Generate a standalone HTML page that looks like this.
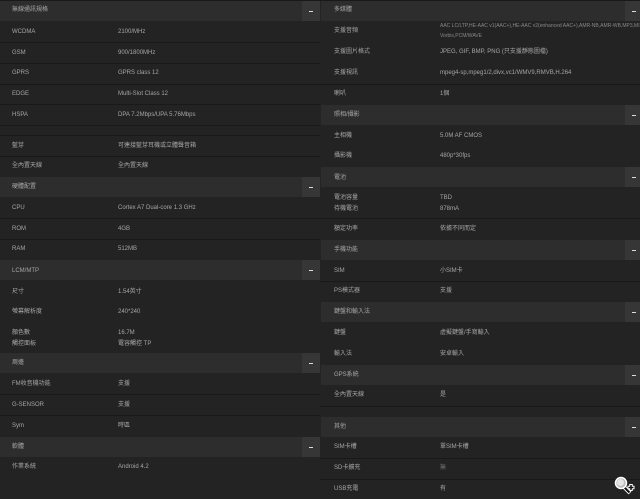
<!DOCTYPE html>
<html><head><meta charset="utf-8"><style>
body{margin:0;width:640px;height:499px;background:#232323;position:relative;overflow:hidden;font-family:"Liberation Sans","Noto Sans CJK TC",sans-serif;font-size:6px;color:#a6a6a6}
div{position:absolute}
.h{height:20px;background:#2d2d2d}
.m{height:20px;width:18px;background:#363636}
.m::after{content:"";position:absolute;left:7px;top:10px;width:4px;height:1px;background:#ddd}
.l{height:1px;background:#191919}
.t{line-height:8px;white-space:nowrap}
</style></head><body>
<div class="h" style="left:0;top:1px;width:302px"></div><div class="m" style="left:302px;top:1px"></div>
<div class="h" style="left:0;top:177px;width:302px"></div><div class="m" style="left:302px;top:177px"></div>
<div class="h" style="left:0;top:260px;width:302px"></div><div class="m" style="left:302px;top:260px"></div>
<div class="h" style="left:0;top:353px;width:302px"></div><div class="m" style="left:302px;top:353px"></div>
<div class="h" style="left:0;top:437px;width:302px"></div><div class="m" style="left:302px;top:437px"></div>
<div class="l" style="left:0;top:0;width:320px"></div>
<div class="l" style="left:0;top:42px;width:320px"></div>
<div class="l" style="left:0;top:63px;width:320px"></div>
<div class="l" style="left:0;top:84px;width:320px"></div>
<div class="l" style="left:0;top:104px;width:320px"></div>
<div class="l" style="left:0;top:125px;width:320px"></div>
<div class="l" style="left:0;top:135px;width:320px"></div>
<div class="l" style="left:0;top:156px;width:320px"></div>
<div class="l" style="left:0;top:218px;width:320px"></div>
<div class="l" style="left:0;top:239px;width:320px"></div>
<div class="l" style="left:0;top:394px;width:320px"></div>
<div class="l" style="left:0;top:415px;width:320px"></div>
<div class="t" style="left:12px;top:6px">無線通訊規格</div>
<div class="t" style="left:12px;top:28px">WCDMA</div><div class="t" style="left:118px;top:28px">2100/MHz</div>
<div class="t" style="left:12px;top:49px">GSM</div><div class="t" style="left:118px;top:49px">900/1800MHz</div>
<div class="t" style="left:12px;top:69px">GPRS</div><div class="t" style="left:118px;top:69px">GPRS class 12</div>
<div class="t" style="left:12px;top:90px">EDGE</div><div class="t" style="left:118px;top:90px">Multi-Slot Class 12</div>
<div class="t" style="left:12px;top:111px">HSPA</div><div class="t" style="left:118px;top:111px">DPA 7.2Mbps/UPA 5.76Mbps</div>
<div class="t" style="left:12px;top:142px">藍芽</div><div class="t" style="left:118px;top:142px">可連接藍芽耳機或立體聲音箱</div>
<div class="t" style="left:12px;top:162px">全內置天線</div><div class="t" style="left:118px;top:162px">全內置天線</div>
<div class="t" style="left:12px;top:183px">硬體配置</div>
<div class="t" style="left:12px;top:204px">CPU</div><div class="t" style="left:118px;top:204px">Cortex A7 Dual-core 1.3 GHz</div>
<div class="t" style="left:12px;top:225px">ROM</div><div class="t" style="left:118px;top:225px">4GB</div>
<div class="t" style="left:12px;top:245px">RAM</div><div class="t" style="left:118px;top:245px">512MB</div>
<div class="t" style="left:12px;top:267px">LCM/MTP</div>
<div class="t" style="left:12px;top:288px">尺寸</div><div class="t" style="left:118px;top:288px">1.54英寸</div>
<div class="t" style="left:12px;top:308px">螢幕解析度</div><div class="t" style="left:118px;top:308px">240*240</div>
<div class="t" style="left:12px;top:329px">顏色數</div><div class="t" style="left:118px;top:329px">16.7M</div>
<div class="t" style="left:12px;top:340px">觸控面板</div><div class="t" style="left:118px;top:340px">電容觸控 TP</div>
<div class="t" style="left:12px;top:359px">周邊</div>
<div class="t" style="left:12px;top:380px">FM收音機功能</div><div class="t" style="left:118px;top:380px">支援</div>
<div class="t" style="left:12px;top:401px">G-SENSOR</div><div class="t" style="left:118px;top:401px">支援</div>
<div class="t" style="left:12px;top:422px">Sym</div><div class="t" style="left:118px;top:422px">時區</div>
<div class="t" style="left:12px;top:443px">軟體</div>
<div class="t" style="left:12px;top:463px">作業系統</div><div class="t" style="left:118px;top:463px">Android 4.2</div>
<div class="h" style="left:321px;top:1px;width:304px"></div><div class="m" style="left:625px;top:1px;width:15px"></div>
<div class="h" style="left:321px;top:105px;width:304px"></div><div class="m" style="left:625px;top:105px;width:15px"></div>
<div class="h" style="left:321px;top:167px;width:304px"></div><div class="m" style="left:625px;top:167px;width:15px"></div>
<div class="h" style="left:321px;top:240px;width:304px"></div><div class="m" style="left:625px;top:240px;width:15px"></div>
<div class="h" style="left:321px;top:302px;width:304px"></div><div class="m" style="left:625px;top:302px;width:15px"></div>
<div class="h" style="left:321px;top:365px;width:304px"></div><div class="m" style="left:625px;top:365px;width:15px"></div>
<div class="h" style="left:321px;top:417px;width:304px"></div><div class="m" style="left:625px;top:417px;width:15px"></div>
<div class="l" style="left:320px;top:0;width:320px"></div>
<div class="l" style="left:320px;top:84px;width:320px"></div>
<div class="l" style="left:320px;top:218px;width:320px"></div>
<div class="l" style="left:320px;top:281px;width:320px"></div>
<div class="l" style="left:320px;top:406px;width:320px"></div>
<div class="l" style="left:320px;top:458px;width:320px"></div>
<div class="l" style="left:320px;top:479px;width:320px"></div>
<div class="t" style="left:334px;top:6px">多媒體</div>
<div class="t" style="left:334px;top:27px">支援音頻</div>
<div class="t" style="left:440px;top:22px;font-size:5px;color:#888">AAC LC/LTP,HE-AAC v1(AAC+),HE-AAC v2(enhanced AAC+),AMR-NB,AMR-WB,MP3,MIDI,Ogg</div>
<div class="t" style="left:440px;top:32px;font-size:5px;color:#888">Vorbis,PCM/WAVE</div>
<div class="t" style="left:334px;top:48px">支援圖片格式</div><div class="t" style="left:440px;top:48px">JPEG, GIF, BMP, PNG (只支援靜態圖檔)</div>
<div class="t" style="left:334px;top:69px">支援視訊</div><div class="t" style="left:440px;top:69px">mpeg4-sp,mpeg1/2,divx,vc1/WMV9,RMVB,H.264</div>
<div class="t" style="left:334px;top:90px">喇叭</div><div class="t" style="left:440px;top:90px">1個</div>
<div class="t" style="left:334px;top:111px">照相/攝影</div>
<div class="t" style="left:334px;top:132px">主相機</div><div class="t" style="left:440px;top:132px">5.0M AF CMOS</div>
<div class="t" style="left:334px;top:152px">攝影機</div><div class="t" style="left:440px;top:152px">480p*30fps</div>
<div class="t" style="left:334px;top:174px">電池</div>
<div class="t" style="left:334px;top:194px">電池容量</div><div class="t" style="left:440px;top:194px">TBD</div>
<div class="t" style="left:334px;top:205px">待機電池</div><div class="t" style="left:440px;top:205px">878mA</div>
<div class="t" style="left:334px;top:225px">額定功率</div><div class="t" style="left:440px;top:225px">依據不同而定</div>
<div class="t" style="left:334px;top:246px">手機功能</div>
<div class="t" style="left:334px;top:267px">SIM</div><div class="t" style="left:440px;top:267px">小SIM卡</div>
<div class="t" style="left:334px;top:287px">PS模式器</div><div class="t" style="left:440px;top:287px">支援</div>
<div class="t" style="left:334px;top:308px">鍵盤和輸入法</div>
<div class="t" style="left:334px;top:329px">鍵盤</div><div class="t" style="left:440px;top:329px">虛擬鍵盤/手寫輸入</div>
<div class="t" style="left:334px;top:350px">輸入法</div><div class="t" style="left:440px;top:350px">安卓輸入</div>
<div class="t" style="left:334px;top:371px">GPS系統</div>
<div class="t" style="left:334px;top:391px">全內置天線</div><div class="t" style="left:440px;top:391px">是</div>
<div class="t" style="left:334px;top:423px">其他</div>
<div class="t" style="left:334px;top:443px">SIM卡槽</div><div class="t" style="left:440px;top:443px">單SIM卡槽</div>
<div class="t" style="left:334px;top:464px">SD卡擴充</div><div class="t" style="left:440px;top:464px;color:#777">無</div>
<div class="t" style="left:334px;top:485px">USB充電</div><div class="t" style="left:440px;top:485px">有</div>
<svg style="position:absolute;left:614px;top:476px" width="22" height="20" viewBox="0 0 22 20">
<line x1="10" y1="11" x2="16" y2="17" stroke="#fff" stroke-width="4"/>
<line x1="10" y1="11" x2="15.5" y2="16.5" stroke="#111" stroke-width="2"/>
<circle cx="7" cy="7" r="5.5" fill="#bbb" stroke="#fff" stroke-width="1.5"/>
<circle cx="6.5" cy="6.5" r="3.5" fill="#e4e4e4"/>
<line x1="17" y1="8" x2="17" y2="15" stroke="#fff" stroke-width="3.5"/>
<line x1="13.5" y1="11.5" x2="20.5" y2="11.5" stroke="#fff" stroke-width="3.5"/>
<line x1="17" y1="9" x2="17" y2="14" stroke="#111" stroke-width="1.5"/>
<line x1="14.5" y1="11.5" x2="19.5" y2="11.5" stroke="#111" stroke-width="1.5"/>
</svg>
</body></html>
